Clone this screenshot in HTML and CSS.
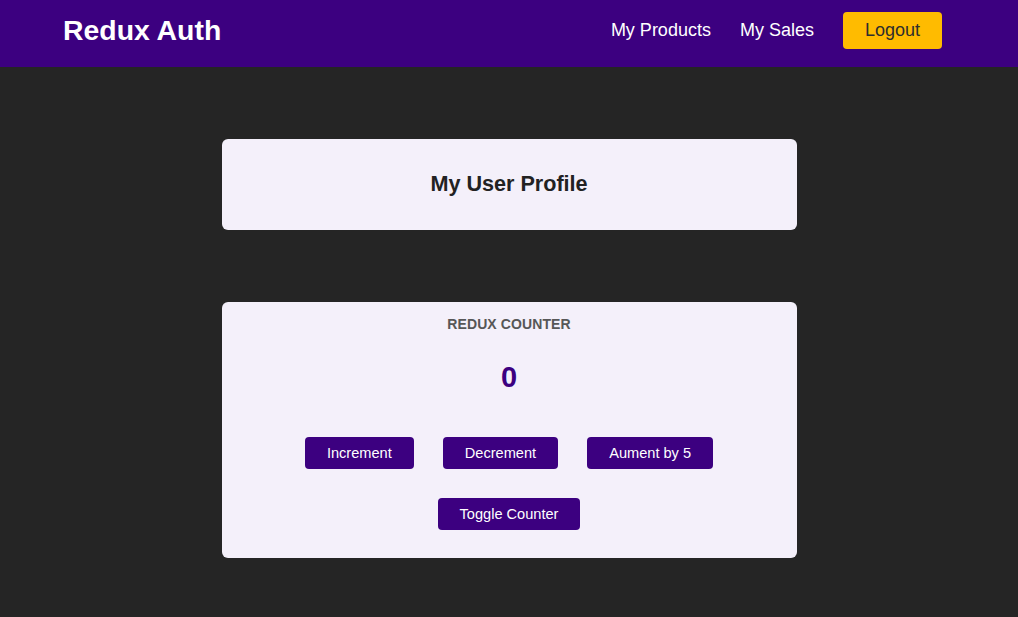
FILE: index.html
```html
<!DOCTYPE html>
<html lang="en">
<head>
<meta charset="utf-8">
<title>Redux Auth</title>
<link rel="stylesheet" href="styles.css">
</head>
<body>
<header class="header">
  <h1 class="brand">Redux Auth</h1>
  <nav class="nav">
    <a class="nav-link" href="#">My Products</a>
    <a class="nav-link" href="#">My Sales</a>
    <button class="logout">Logout</button>
  </nav>
</header>
<main class="main">
  <section class="card profile">
    <h2 class="profile-title">My User Profile</h2>
  </section>
  <section class="card counter">
    <h3 class="counter-label">Redux Counter</h3>
    <div class="counter-value">0</div>
    <div class="btn-row">
      <button class="btn">Increment</button>
      <button class="btn">Decrement</button>
      <button class="btn">Aument by 5</button>
    </div>
    <div class="btn-row">
      <button class="btn">Toggle Counter</button>
    </div>
  </section>
</main>
</body>
</html>
```
FILE: styles.css
```css
* { box-sizing: border-box; }
html, body {
  margin: 0;
  padding: 0;
  background: #252525;
  font-family: "Liberation Sans", Arial, sans-serif;
}
.header {
  height: 67px;
  background: #3c0080;
  display: flex;
  align-items: center;
  justify-content: space-between;
  padding: 0 76px 6px 63px;
}
.brand {
  margin: 0;
  color: #fff;
  font-size: 28.4px;
  font-weight: bold;
}
.nav {
  display: flex;
  align-items: center;
  gap: 29px;
}
.nav-link {
  color: #fff;
  text-decoration: none;
  font-size: 18px;
}
.logout {
  font-family: inherit;
  font-size: 18px;
  color: #2d2d2d;
  background: #ffbb00;
  border: none;
  border-radius: 4px;
  padding: 8px 22px;
  line-height: 21px;
  cursor: pointer;
}
.main {
  display: flex;
  flex-direction: column;
  align-items: center;
  gap: 72px;
  padding-top: 72px;
}
.card {
  width: 575px;
  background: #f4f0fa;
  border-radius: 6px;
  text-align: center;
}
.profile {
  height: 91px;
  display: flex;
  align-items: center;
  justify-content: center;
  padding-bottom: 2px;
}
.profile-title {
  margin: 0;
  font-size: 21.6px;
  color: #222;
  font-weight: bold;
}
.counter {
  padding: 14px 0 28px;
}
.counter-label {
  margin: 0;
  font-size: 14px;
  line-height: 17px;
  letter-spacing: 0.1px;
  text-transform: uppercase;
  color: #575757;
  font-weight: bold;
}
.counter-value {
  margin-top: 27px;
  font-size: 29px;
  line-height: 34px;
  font-weight: bold;
  color: #3c0080;
}
.btn-row {
  display: flex;
  justify-content: center;
  gap: 29px;
  margin-top: 29px;
}
.counter-value + .btn-row {
  margin-top: 43px;
}
.btn {
  font-family: inherit;
  font-size: 14.6px;
  line-height: 16px;
  color: #fff;
  background: #3c0080;
  border: none;
  border-radius: 4px;
  padding: 8px 22px;
  cursor: pointer;
}
```
